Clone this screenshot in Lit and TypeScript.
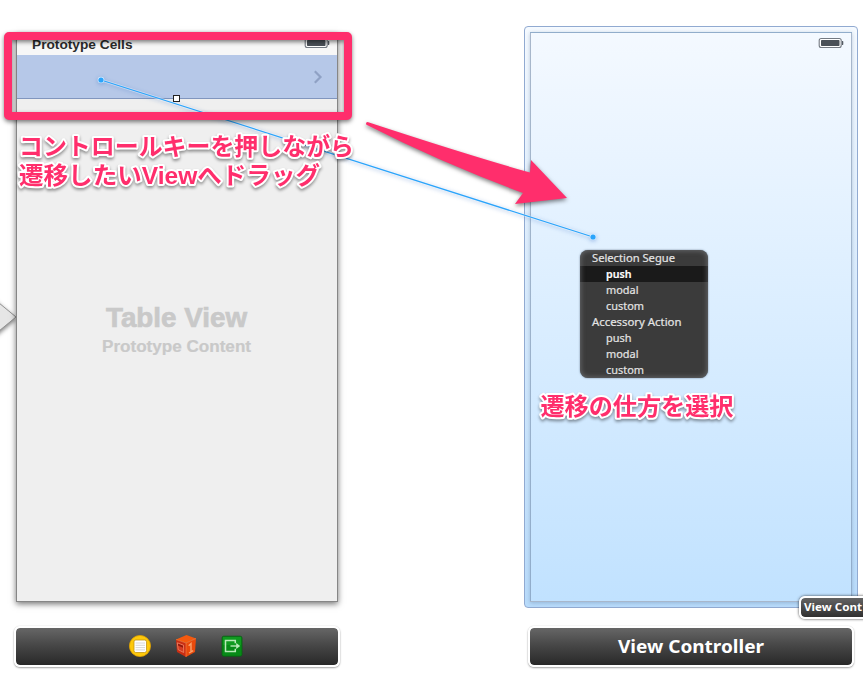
import { LitElement, html, css, svg } from "lit";
import { customElement, property } from "lit/decorators.js";

@customElement("battery-icon")
class BatteryIcon extends LitElement {
  static styles = css`
    :host { display: block; width: 26px; height: 12px; }
    svg { display: block; }
  `;
  render() {
    return html`<svg width="26" height="12" viewBox="0 0 26 12">
      <rect x="1.2" y="1.5" width="22" height="9" rx="2" fill="#fff" stroke="#747a82" stroke-width="1.1"/>
      <rect x="3" y="3" width="18.5" height="6" rx=".7" fill="#4b5158"/>
      <path d="M24 4h.7q.6 0 .6 .7v2.6q0 .7-.6 .7H24z" fill="#555b63"/>
    </svg>`;
  }
}

@customElement("segue-menu")
class SegueMenu extends LitElement {
  static styles = css`
    :host {
      display: block; box-sizing: border-box; width: 128px; height: 128px;
      border-radius: 8px; overflow: hidden; background: #3b3b3b; position: relative;
      font: 11px/16px "Noto Sans", "Open Sans", sans-serif; color: #e4e4e4;
      box-shadow: 0 0 2px rgba(60, 80, 100, .7);
    }
    :host::after {
      content: ""; position: absolute; inset: 0; border-radius: 8px;
      box-shadow: inset 0 0 5px 1px rgba(150, 155, 160, .45);
    }
    .row { height: 16px; padding-left: 12px; white-space: nowrap; }
    .action { padding-left: 26px; }
    .selected { background: #1a1a1a; color: #fff; font-weight: 600; }
    .fit { display: block; overflow: visible; }
    text { fill: currentColor; stroke: currentColor; stroke-width: .2px; }
  `;
  private rows: [string, number, boolean, boolean][] = [
    ["Selection Segue", 83, false, false],
    ["push", 25.5, true, true],
    ["modal", 32.5, true, false],
    ["custom", 38, true, false],
    ["Accessory Action", 89.5, false, false],
    ["push", 25.5, true, false],
    ["modal", 32.5, true, false],
    ["custom", 38, true, false],
  ];
  render() {
    return this.rows.map(
      ([label, width, action, selected]) => html`<div
        class="row ${action ? "action" : ""} ${selected ? "selected" : ""}"
      ><svg class="fit" width="100" height="16"><text y="12" textLength=${width} lengthAdjust="spacingAndGlyphs">${label}</text></svg></div>`
    );
  }
}

@customElement("scene-dock")
class SceneDock extends LitElement {
  @property() label = "";
  static styles = css`
    :host {
      display: flex; box-sizing: border-box; width: 326px; height: 41px;
      align-items: center; justify-content: center; gap: 22px;
      border: 2px solid #fff; border-radius: 6px; padding-bottom: 2px;
      background: linear-gradient(#666, #484848 45%, #282828) padding-box;
      box-shadow: 0 0 1px rgba(0, 0, 0, .2), 0 1px 2px rgba(0, 0, 0, .35);
      color: #fff;
    }
    :host(:not([label])) { padding-left: 18px; }
    svg { display: block; overflow: visible; }
    text { fill: #fff; font: 700 18px "Noto Sans", "Open Sans", sans-serif; }
  `;
  render() {
    if (this.label)
      return html`<svg width="146" height="24"><text y="18.5" textLength="146" lengthAdjust="spacingAndGlyphs">${this.label}</text></svg>`;
    return html`
      <svg width="24" height="24" viewBox="0 0 24 24">
        <circle cx="12" cy="12" r="10.6" fill="#fdc80b" stroke="#dca000" stroke-width=".8"/>
        <rect x="6" y="6" width="12.5" height="12.5" rx="1.8" fill="#fff" stroke="#c39414" stroke-width=".8"/>
        <path d="M7.5 9H17M7.5 11.3H17M7.5 13.6H17M7.5 15.9H17" stroke="#ccc" stroke-width=".8"/>
      </svg>
      <svg width="24" height="24" viewBox="0 0 24 24">
        <path d="M2 5.5 12.5 1 22 4.5 12 9z" fill="#f4590e"/>
        <path d="M2 5.5 12 9V23L3 18z" fill="#c92d12"/>
        <path d="M22 4.5 12 9V23L21 18z" fill="#e94a0c"/>
        <path d="M3.3 8.8 9.5 11.2 9.7 18.5 4.2 15.7z" fill="#d43b22" stroke="#ee8868" stroke-width=".8"/>
        <path d="M4 9.8 9 11.8V13.7L4.1 11.5z" fill="#8f1a0d"/>
        <path d="M14.7 11.8 17 9.6V17.8M15 19l4.2-2.3" fill="none" stroke="#f8a26b" stroke-width="1.4"/>
        <path d="M2 5.5 12 9 22 4.5M12 9V23" fill="none" stroke="#f98448" stroke-width=".6"/>
      </svg>
      <svg width="24" height="24" viewBox="0 0 24 24">
        <rect x="2" y="2.2" width="20" height="20" rx="1.8" fill="#078a17" stroke="#056310" stroke-width=".8"/>
        <path d="M3 3H21V11H3z" fill="#18a526" opacity=".6"/>
        <path d="M15.3 9.3V6.6H5.5V17.4H15.3V14.7" fill="none" stroke="#b9eab8" stroke-width="1.5"/>
        <path d="M10.5 12H17" stroke="#b9eab8" stroke-width="1.4"/>
        <path d="M16.2 8.9 20.2 12 16.2 15.1z" fill="#b9eab8"/>
      </svg>`;
  }
}

@customElement("app-root")
class AppRoot extends LitElement {
  static styles = css`
    :host {
      display: block; position: relative; width: 863px; height: 685px;
      overflow: hidden; background: #fff; font-family: "Liberation Sans", Arial, sans-serif;
    }
    .scene { position: absolute; box-sizing: border-box; display: flex; flex-direction: column; }
    .table {
      left: 16px; top: 33px; width: 322px; height: 569px; border: 1px solid #868686;
      background: #efefef; box-shadow: 0 2px 6px rgba(0, 0, 0, .55);
    }
    .header {
      flex: none; height: 21px; background: #f7f7f7; display: flex;
      justify-content: space-between; align-items: flex-start; padding: 0 7px 0 15px;
    }
    .header svg { overflow: visible; }
    .header text { font: 700 13px "Liberation Sans", Arial, sans-serif; fill: #2b2b2b; }
    .header battery-icon { margin-top: 3px; }
    .cell {
      flex: none; height: 43px; background: #b6c8e8; border-bottom: 1px solid #8196be;
      display: flex; align-items: center; justify-content: flex-end; padding-right: 14px;
    }
    .placeholder {
      flex: 1; display: flex; flex-direction: column; align-items: center;
      padding: 200px 1px 0 0;
    }
    .placeholder svg { overflow: visible; }
    .placeholder text { font-family: "Liberation Sans", Arial, sans-serif; font-weight: 700; fill: #c9c9c9; }
    .placeholder .big { font-size: 28px; stroke: #c9c9c9; stroke-width: .7px; }
    .placeholder .small { font-size: 16px; stroke: #c9c9c9; stroke-width: .2px; }
    .view {
      left: 524px; top: 26px; width: 334px; height: 582px; padding: 5px;
      border: 1px solid #91aad1; border-radius: 4px;
      background: linear-gradient(#f5faff, #b9dcfb);
    }
    .screen {
      flex: 1; box-sizing: border-box; border: 1px solid rgba(105, 130, 160, .55);
      background: linear-gradient(#f4f9ff, #c1e2ff);
      box-shadow: 0 1px 4px rgba(80, 110, 150, .35);
      display: flex; justify-content: flex-end; align-items: flex-start;
      padding: 4px 7px 0 0;
    }
    .dock { position: absolute; top: 626px; }
    .dock-left { left: 14px; }
    .dock-right { left: 528px; }
    segue-menu { position: absolute; left: 580px; top: 250px; }
    .tag {
      position: absolute; left: 799px; top: 596px; width: 90px; height: 23px; box-sizing: border-box;
      border: 2px solid #fff; border-radius: 6px; padding-left: 3px;
      background: linear-gradient(#636363, #303030) padding-box;
      box-shadow: 0 0 3px rgba(0, 0, 0, .75); overflow: hidden;
    }
    .tag svg { display: block; overflow: visible; }
    .tag text { font: 700 11px "Noto Sans", "Open Sans", sans-serif; fill: #fff; }
    .overlay { position: absolute; inset: 0; display: block; }
    .note {
      font-family: "Liberation Sans", "Noto Sans CJK JP", sans-serif; font-weight: 700; font-size: 24px;
      fill: #ff2e6c; stroke: #fff; stroke-width: 4px; stroke-linejoin: round; paint-order: stroke;
      filter: drop-shadow(0 2px 1.5px rgba(0, 0, 0, .4));
    }
    .lifted { filter: drop-shadow(0 2px 2px rgba(0, 0, 0, .5)); }
    .glow { filter: drop-shadow(0 1px 2px rgba(40, 100, 190, .4)); }
  `;

  private notes: [string, number, number, number][] = [
    ["コントロールキーを押しながら", 19, 154.5, 335],
    ["遷移したいViewへドラッグ", 19, 184, 301],
    ["遷移の仕方を選択", 540.5, 415, 193],
  ];

  render() {
    return html`
      <svg class="overlay" width="863" height="685">
        <path class="lifted" d="M-18 289 16 317-18 345z" fill="#e6e6e6" stroke="#929292"/>
      </svg>
      <section class="scene table">
        <div class="header">
          <svg width="101" height="20"><text y="15" textLength="100.5" lengthAdjust="spacingAndGlyphs">Prototype Cells</text></svg>
          <battery-icon></battery-icon>
        </div>
        <div class="cell">
          <svg width="10" height="14" viewBox="0 0 10 14"><path d="M1.8 1.3 7.5 7 1.8 12.7" fill="none" stroke="#8fa1c4" stroke-width="2.2"/></svg>
        </div>
        <div class="placeholder">
          <svg width="142" height="36"><text class="big" y="28" textLength="141" lengthAdjust="spacingAndGlyphs">Table View</text></svg>
          <svg width="149" height="22"><text class="small" y="17" textLength="149" lengthAdjust="spacingAndGlyphs">Prototype Content</text></svg>
        </div>
      </section>
      <section class="scene view"><div class="screen"><battery-icon></battery-icon></div></section>
      <scene-dock class="dock dock-left"></scene-dock>
      <scene-dock class="dock dock-right" label="View Controller"></scene-dock>
      <div class="tag"><svg width="58" height="19"><text y="13" textLength="58" lengthAdjust="spacingAndGlyphs">View Cont</text></svg></div>
      <segue-menu></segue-menu>
      <svg class="overlay" width="863" height="685">
        <g class="glow">
          <path d="M101 80 593 237" stroke="#fff" stroke-opacity=".45" stroke-width="2.6"/>
          <path d="M101 80 593 237" stroke="#2ba4fb" stroke-width="1.2"/>
          <circle cx="101" cy="80" r="3.3" fill="#d9edff"/>
          <circle cx="101" cy="80" r="2.6" fill="#2ba4fb"/>
          <circle cx="593" cy="237" r="3.3" fill="#d9edff"/>
          <circle cx="593" cy="237" r="2.6" fill="#2ba4fb"/>
        </g>
        <rect x="173.5" y="95.5" width="6" height="6" fill="#fff" stroke="#222"/>
        <rect class="lifted" x="8" y="36" width="340" height="80" rx="1" fill="none" stroke="#ff2e6c" stroke-width="8" stroke-linejoin="round"/>
        <path class="lifted" fill="#ff2e6c" d="M367.5 122Q366 122 366 123.5T367.5 125.3Q443 163.5 523 193L515 204 567 198 531 160 530 172.5Q471 156 367.5 122z"/>
        ${this.notes.map(
          ([label, x, y, width]) => svg`<text class="note" x=${x} y=${y} textLength=${width} lengthAdjust="spacingAndGlyphs">${label}</text>`
        )}
      </svg>
    `;
  }
}
